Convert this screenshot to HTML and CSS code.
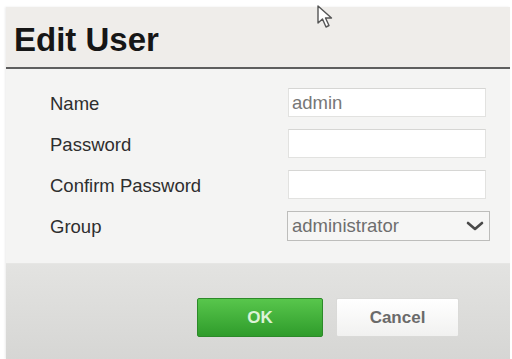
FILE: index.html
```html
<!DOCTYPE html>
<html lang="en">
<head>
    <meta charset="UTF-8">
    <meta name="viewport" content="width=device-width, initial-scale=1.0">
    <title>Edit User</title>
    <link rel="stylesheet" href="styles.css">
</head>
<body>
    <div class="dialog">
        <header class="dialog-header">
            <h1 class="dialog-title">Edit User</h1>
        </header>

        <form class="dialog-body">
            <label class="field-label" for="name">Name</label>
            <input class="field-input" id="name" type="text" value="admin">

            <label class="field-label" for="password">Password</label>
            <input class="field-input" id="password" type="password">

            <label class="field-label" for="confirm">Confirm Password</label>
            <input class="field-input" id="confirm" type="password">

            <label class="field-label" for="group">Group</label>
            <div class="select-box" id="group">
                <span class="select-value">administrator</span>
                <svg class="select-arrow" viewBox="0 0 18 10" fill="none" xmlns="http://www.w3.org/2000/svg">
                    <path d="M2 2L9 8L16 2" stroke="currentColor" stroke-width="2.6" stroke-linecap="round" stroke-linejoin="round"/>
                </svg>
            </div>
        </form>

        <footer class="dialog-footer">
            <button class="btn btn-ok" type="button">OK</button>
            <button class="btn btn-cancel" type="button">Cancel</button>
        </footer>
    </div>

    <!-- mouse pointer captured in the screenshot -->
    <svg class="cursor" viewBox="0 0 20 26" fill="none" xmlns="http://www.w3.org/2000/svg">
        <path d="M2 2V19L6.5 15L10 23L13 21.5L9.5 14H15.5Z" fill="#fff" stroke="#555" stroke-width="1.4" stroke-linejoin="round"/>
    </svg>
</body>
</html>
```

FILE: styles.css
```css
* {
    margin: 0;
    padding: 0;
    box-sizing: border-box;
}

body {
    font-family: "Liberation Sans", Arial, sans-serif;
    background-color: #fff;
    color: #333;
    height: 359px;
    overflow: hidden;
}

.dialog {
    margin: 7px 2px 0 6px;
    width: 504px;
    background-color: #f3f3f2;
    box-shadow: -1px 0 2px rgba(0, 0, 0, 0.08);
}

.dialog-header {
    height: 62px;
    padding: 0 8px;
    background-color: #efedea;
    border-bottom: 2px solid #5e5e5e;
}

.dialog-title {
    font-size: 33px;
    font-weight: bold;
    color: #161616;
    line-height: 62px;
    padding-top: 2px;
}

.dialog-body {
    display: grid;
    grid-template-columns: 238px 198px;
    grid-auto-rows: 29px;
    row-gap: 12px;
    align-items: center;
    padding: 19px 0 23px 44px;
    background-color: #f4f4f3;
}

.field-label {
    font-size: 18.5px;
    color: #2e2e2e;
    padding-top: 3px;
}

.field-input {
    width: 198px;
    height: 29px;
    border: 1px solid #e2e2e0;
    border-top-color: #d6d6d4;
    background-color: #fff;
    font-family: inherit;
    font-size: 18.5px;
    color: #777;
    padding: 0 3px;
}

.select-box {
    display: flex;
    align-items: center;
    justify-content: space-between;
    width: 203px;
    height: 30px;
    margin-left: -1px;
    padding: 0 4px 0 4px;
    border: 1px solid #bdbdbb;
    background-color: #f6f6f5;
}

.select-value {
    font-size: 18.5px;
    color: #6e6e6e;
}

.select-arrow {
    width: 18px;
    height: 10px;
    color: #4a4a4a;
    margin-right: 1px;
}

.dialog-footer {
    display: flex;
    gap: 13px;
    height: 96px;
    padding: 34px 0 0 191px;
    border-top: 1px solid #e6e6e4;
    background: linear-gradient(#e3e3e1, #d6d6d4);
}

.btn {
    height: 39px;
    border-radius: 2px;
    font-family: inherit;
    font-size: 17px;
    font-weight: bold;
    cursor: pointer;
}

.btn-ok {
    width: 126px;
    color: #dcf3d6;
    background: linear-gradient(#58c64c, #2f9c2b);
    border: 1px solid #2c8a29;
}

.btn-cancel {
    width: 123px;
    color: #6a6a6a;
    background: linear-gradient(#fff, #f1f1f0);
    border: 1px solid #dadad8;
}

.cursor {
    position: absolute;
    left: 316px;
    top: 4px;
    width: 20px;
    height: 26px;
}
```
